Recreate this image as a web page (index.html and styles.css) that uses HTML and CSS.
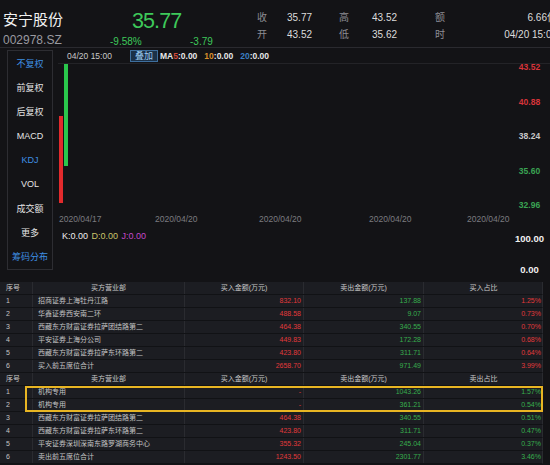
FILE: index.html
```html
<!DOCTYPE html>
<html lang="zh-CN">
<head>
<meta charset="utf-8">
<title>安宁股份 002978.SZ</title>
<link rel="stylesheet" href="styles.css">
</head>
<body>
<header class="top">
  <div class="ident">
    <div class="name">安宁股份</div>
    <div class="code">002978.SZ</div>
  </div>
  <div class="last">
    <div class="price">35.77</div>
    <div class="chg"><span class="pct">-9.58%</span><span>-3.79</span></div>
  </div>
  <div class="quote">
    <div class="qrow"><span class="ql">收</span><span class="qv">35.77</span><span class="ql l2">高</span><span class="qv v2">43.52</span><span class="ql l3">额</span><span class="qv v3">6.66亿</span></div>
    <div class="qrow"><span class="ql">开</span><span class="qv">43.52</span><span class="ql l2">低</span><span class="qv v2">35.62</span><span class="ql l3">时</span><span class="qv v3">04/20 15:00</span></div>
  </div>
</header>

<div class="main">
  <nav class="side">
    <div class="it on">不复权</div>
    <div class="it">前复权</div>
    <div class="it">后复权</div>
    <div class="it">MACD</div>
    <div class="it on">KDJ</div>
    <div class="it">VOL</div>
    <div class="it">成交额</div>
    <div class="it">更多</div>
    <div class="it on">筹码分布</div>
  </nav>
  <section class="chart">
    <div class="chart-head">
      <span class="time">04/20 15:00</span>
      <span class="overlay">叠加</span>
      <span class="ma">MA<span class="n5">5</span>:0.00</span>
      <span class="ma"><span class="n10">10</span>:0.00</span>
      <span class="ma"><span class="n20">20</span>:0.00</span>
    </div>
    <div class="plot">
      <div class="candles">
        <span class="bar red"></span>
        <span class="bar green"></span>
      </div>
      <div class="axis">
        <span class="up">43.52</span>
        <span class="up">40.88</span>
        <span class="mid">38.24</span>
        <span class="dn">35.60</span>
        <span class="dn">32.96</span>
      </div>
    </div>
    <div class="dates">
      <span>2020/04/17</span>
      <span>2020/04/20</span>
      <span>2020/04/20</span>
      <span>2020/04/20</span>
      <span>2020/04/20</span>
    </div>
    <div class="ind">
      <div class="kdj"><span class="k">K:0.00</span><span class="d">D:0.00</span><span class="j">J:0.00</span></div>
      <div class="ind-axis"><span>100.00</span><span>0.00</span></div>
    </div>
  </section>
</div>

<section class="tables">
  <div class="row head"><span>序号</span><span class="c">买方营业部</span><span class="c">买入金额(万元)</span><span class="c">卖出金额(万元)</span><span class="c">买入占比</span></div>
  <div class="row"><span>1</span><span>招商证券上海牡丹江路</span><span class="r red-t">832.10</span><span class="r grn-t">137.88</span><span class="r red-t">1.25%</span></div>
  <div class="row"><span>2</span><span>华鑫证券西安南二环</span><span class="r red-t">488.58</span><span class="r grn-t">9.07</span><span class="r red-t">0.73%</span></div>
  <div class="row"><span>3</span><span>西藏东方财富证券拉萨团结路第二</span><span class="r red-t">464.38</span><span class="r grn-t">340.55</span><span class="r red-t">0.70%</span></div>
  <div class="row"><span>4</span><span>平安证券上海分公司</span><span class="r red-t">449.83</span><span class="r grn-t">172.28</span><span class="r red-t">0.68%</span></div>
  <div class="row"><span>5</span><span>西藏东方财富证券拉萨东环路第二</span><span class="r red-t">423.80</span><span class="r grn-t">311.71</span><span class="r red-t">0.64%</span></div>
  <div class="row"><span>6</span><span>买入前五席位合计</span><span class="r red-t">2658.70</span><span class="r grn-t">971.49</span><span class="r red-t">3.99%</span></div>

  <div class="row head"><span>序号</span><span class="c">卖方营业部</span><span class="c">买入金额(万元)</span><span class="c">卖出金额(万元)</span><span class="c">卖出占比</span></div>
  <div class="tbody">
    <div class="row"><span>1</span><span>机构专用</span><span class="r red-t">-</span><span class="r grn-t">1043.26</span><span class="r grn-t">1.57%</span></div>
    <div class="row"><span>2</span><span>机构专用</span><span class="r red-t">-</span><span class="r grn-t">361.21</span><span class="r grn-t">0.54%</span></div>
    <div class="row"><span>3</span><span>西藏东方财富证券拉萨团结路第二</span><span class="r red-t">464.38</span><span class="r grn-t">340.55</span><span class="r grn-t">0.51%</span></div>
    <div class="row"><span>4</span><span>西藏东方财富证券拉萨东环路第二</span><span class="r red-t">423.80</span><span class="r grn-t">311.71</span><span class="r grn-t">0.47%</span></div>
    <div class="row"><span>5</span><span>平安证券深圳深南东路罗湖商务中心</span><span class="r red-t">355.32</span><span class="r grn-t">245.04</span><span class="r grn-t">0.37%</span></div>
    <div class="row"><span>6</span><span>卖出前五席位合计</span><span class="r red-t">1243.50</span><span class="r grn-t">2301.77</span><span class="r grn-t">3.46%</span></div>
    <div class="hl"></div>
  </div>
</section>
</body>
</html>
```

FILE: styles.css
```css
* { box-sizing: border-box; margin: 0; padding: 0; }
html, body { width: 550px; height: 465px; overflow: hidden; background: #131316; }
body { font-family: "Liberation Sans", "Noto Sans CJK SC", sans-serif; color: #dddddd; }

/* header */
.top { display: flex; width: 560px; height: 48px; border-bottom: 1px solid #2a2a2f; }
.ident { width: 107px; padding-left: 3px; }
.name { font-size: 15px; line-height: 18px; margin-top: 11px; color: #f2f2f2; white-space: nowrap; }
.code { font-size: 12px; line-height: 14px; margin-top: 4px; color: #9a9aa0; }
.last { width: 148px; color: #3ec95a; }
.price { font-size: 21.5px; line-height: 22px; padding: 10px 0 0 25px; letter-spacing: -0.9px; }
.chg { display: flex; font-size: 10px; line-height: 12px; margin-top: 4px; padding-left: 3px; }
.chg .pct { width: 80px; }
.quote { width: 302px; padding-top: 11px; }
.qrow { display: flex; font-size: 10px; line-height: 14px; white-space: nowrap; }
.qrow + .qrow { margin-top: 3px; }
.ql { width: 32px; padding-left: 2px; color: #8d8d93; }
.qv { width: 52px; color: #dcdcdc; }
.ql.l2 { width: 33px; padding-left: 0; }
.qv.v2 { width: 63px; }
.ql.l3 { width: 14px; padding-left: 0; }
.qv.v3 { flex: 1; text-align: right; }

/* main */
.main { display: flex; height: 233px; }
.side { width: 46px; height: 220px; margin: 2px 0 0 7px; border: 1px solid #2d2d32; display: flex; flex-direction: column; }
.it { height: 24.2px; display: flex; align-items: center; justify-content: center; font-size: 9px; color: #e4e4e4; white-space: nowrap; }
.it.on { color: #3f8fe2; }

.chart { flex: 1; margin-left: 5px; display: flex; flex-direction: column; }
.chart-head { height: 16px; border-bottom: 1px solid #232327; display: flex; align-items: center; padding-left: 9px; font-size: 8.5px; white-space: nowrap; }
.time { width: 63px; color: #c8c8c8; }
.overlay { width: 28px; height: 12px; margin-right: 2px; border: 1px solid #3e6f9e; background: #1b3148; color: #9ccaf0; font-size: 9px; display: flex; align-items: center; justify-content: center; }
.ma { font-weight: bold; color: #e8e8e8; margin-right: 7px; }
.n5 { color: #d24a3a; }
.n10 { color: #d7902a; }
.n20 { color: #3b7fc4; }

.plot { display: flex; height: 147px; }
.candles { flex: 1; position: relative; }
.bar { position: absolute; width: 4px; }
.bar.red { left: 1px; top: 52px; height: 87px; background: #e32a2c; }
.bar.green { left: 6px; top: 0; height: 102px; background: #2ac74c; }
.axis { width: 41px; height: 148px; margin-top: -2px; display: flex; flex-direction: column; justify-content: space-between; align-items: center; font-size: 8.5px; line-height: 10px; font-weight: bold; }
.axis .up { color: #d8343a; }
.axis .mid { color: #c8c8c8; }
.axis .dn { color: #3aa453; }

.dates { height: 16px; line-height: 16px; display: flex; font-size: 8.5px; color: #7b7b80; padding-left: 1px; white-space: nowrap; }
.dates span:nth-child(1) { width: 96px; }
.dates span:nth-child(2) { width: 104px; }
.dates span:nth-child(3) { width: 110px; }
.dates span:nth-child(4) { width: 98px; }

.ind { flex: 1; display: flex; }
.kdj { flex: 1; padding: 3px 0 0 4px; font-size: 9px; line-height: 12px; white-space: nowrap; }
.kdj span { margin-right: 3.5px; }
.k { color: #eeeeee; }
.d { color: #c9c46a; }
.j { color: #c548c8; }
.ind-axis { width: 41px; display: flex; flex-direction: column; justify-content: space-between; align-items: center; padding: 7px 0 6px; font-size: 9.5px; line-height: 10px; font-weight: bold; color: #f0f0f0; }

/* tables */
.tables { width: 543px; margin-top: 1px; background: #1c1d22; }
.row { display: grid; grid-template-columns: 32px 152px 119px 120px 120px; height: 13px; border-bottom: 1px solid #111215; border-right: 1px solid #2a2b30; font-size: 7px; line-height: 12px; color: #c4c4c4; white-space: nowrap; }
.row > span { border-left: 1px solid #2a2b30; padding: 0 2px 0 5px; overflow: hidden; }
.row > span:first-child { border-left: none; padding-left: 6px; }
.row .c { text-align: center; padding: 0; }
.row .r { text-align: right; padding: 0 2px 0 0; }
.row.head { color: #c8c8c8; }
.red-t { color: #e0393b; }
.grn-t { color: #37ad4d; }
.tbody { position: relative; }
.hl { position: absolute; left: 25px; top: 0; width: 518px; height: 26px; border: 2px solid #e8b523; }
```
